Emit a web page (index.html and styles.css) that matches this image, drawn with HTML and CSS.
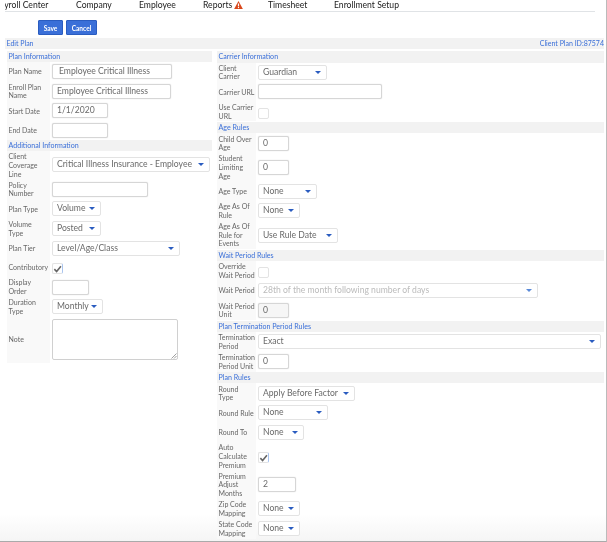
FILE: index.html
```html
<!DOCTYPE html>
<html lang="en">
  <head>
    <meta charset="UTF-8">
    <title>Edit Plan</title>
    <link rel="stylesheet" href="styles.css">
  </head>
  <body>
    <div id="all">
      <div class="topnav">
        <span class="nav-payroll">Payroll Center</span>
        <span class="nav-company">Company</span>
        <span class="nav-employee">Employee</span>
        <span class="nav-reports">Reports
          <svg class="warn" viewBox="0 0 12 11" width="9" height="8"><path d="M6 0 L12 11 L0 11 Z" fill="#d9481c"/><rect x="5.2" y="3.4" width="1.6" height="4" fill="#fff"/><rect x="5.2" y="8.2" width="1.6" height="1.6" fill="#fff"/></svg>
        </span>
        <span class="nav-timesheet">Timesheet</span>
        <span class="nav-enroll">Enrollment Setup</span>
      </div>

      <div class="actions">
        <button class="btn btn-save">Save</button>
        <button class="btn btn-cancel">Cancel</button>
      </div>

      <div class="title-bar">
        <span>Edit Plan</span>
        <span>Client Plan ID:87574</span>
      </div>

      <div class="columns">
        <div class="col col-left">
          <div class="section">Plan Information</div>
          <div class="row"><label>Plan Name</label><div class="ctl w120 ind3 txt">Employee Critical Illness</div></div>
          <div class="row"><label>Enroll Plan Name</label><div class="ctl w119 txt">Employee Critical Illness</div></div>
          <div class="row"><label>Start Date</label><div class="ctl w56 txt">1/1/2020</div></div>
          <div class="row"><label>End Date</label><div class="ctl w56 txt"></div></div>
          <div class="section">Additional Information</div>
          <div class="row"><label>Client<br>Coverage<br>Line</label><div class="ctl w158 sel lift">Critical Illness Insurance - Employee<i class="caret"></i></div></div>
          <div class="row"><label>Policy Number</label><div class="ctl w96 txt"></div></div>
          <div class="row"><label>Plan Type</label><div class="ctl w49 sel">Volume<i class="caret"></i></div></div>
          <div class="row"><label>Volume<br>Type</label><div class="ctl w49 sel">Posted<i class="caret"></i></div></div>
          <div class="row"><label>Plan Tier</label><div class="ctl w128 sel">Level/Age/Class<i class="caret"></i></div></div>
          <div class="row"><label>Contributory</label><div class="check checked"><svg viewBox="0 0 10 10" width="10" height="10"><path d="M1.5 5.2 L4 7.8 L8.8 2" fill="none" stroke="#666" stroke-width="1.8"/></svg></div></div>
          <div class="row"><label>Display Order</label><div class="ctl w37 txt"></div></div>
          <div class="row"><label>Duration Type</label><div class="ctl w51 sel">Monthly<i class="caret"></i></div></div>
          <div class="row row-note"><label>Note</label><div class="ctl note"><svg class="grip" viewBox="0 0 6 6" width="6" height="6"><path d="M0.5 5.5 L5.5 0.5 M3 5.5 L5.5 3" stroke="#777" stroke-width="0.7"/></svg></div></div>
        </div>

        <div class="col col-right">
          <div class="section">Carrier Information</div>
          <div class="row"><label>Client Carrier</label><div class="ctl w69 sel">Guardian<i class="caret"></i></div></div>
          <div class="row"><label>Carrier URL</label><div class="ctl w124 txt"></div></div>
          <div class="row"><label>Use Carrier URL</label><div class="check"></div></div>
          <div class="section">Age Rules</div>
          <div class="row"><label>Child Over Age</label><div class="ctl w31 txt">0</div></div>
          <div class="row"><label>Student<br>Limiting<br>Age</label><div class="ctl w31 txt">0</div></div>
          <div class="row"><label>Age Type</label><div class="ctl w59 sel">None<i class="caret"></i></div></div>
          <div class="row"><label>Age As Of Rule</label><div class="ctl w42 sel">None<i class="caret"></i></div></div>
          <div class="row"><label>Age As Of<br>Rule for<br>Events</label><div class="ctl w80 sel">Use Rule Date<i class="caret"></i></div></div>
          <div class="section">Wait Period Rules</div>
          <div class="row"><label>Override<br>Wait Period</label><div class="check"></div></div>
          <div class="row"><label>Wait Period</label><div class="ctl w280 sel off">28th of the month following number of days<i class="caret"></i></div></div>
          <div class="row"><label>Wait Period<br>Unit</label><div class="ctl w31 txt off-num">0</div></div>
          <div class="section">Plan Termination Period Rules</div>
          <div class="row"><label>Termination<br>Period</label><div class="ctl wfull sel">Exact<i class="caret"></i></div></div>
          <div class="row"><label>Termination<br>Period Unit</label><div class="ctl w31 txt">0</div></div>
          <div class="section">Plan Rules</div>
          <div class="row"><label>Round<br>Type</label><div class="ctl w97 sel">Apply Before Factor<i class="caret"></i></div></div>
          <div class="row"><label>Round Rule</label><div class="ctl w70 sel">None<i class="caret"></i></div></div>
          <div class="row"><label>Round To</label><div class="ctl w46 sel">None<i class="caret"></i></div></div>
          <div class="row"><label>Auto<br>Calculate<br>Premium</label><div class="check checked"><svg viewBox="0 0 10 10" width="10" height="10"><path d="M1.5 5.2 L4 7.8 L8.8 2" fill="none" stroke="#666" stroke-width="1.8"/></svg></div></div>
          <div class="row"><label>Premium<br>Adjust<br>Months</label><div class="ctl w38 txt">2</div></div>
          <div class="row"><label>Zip Code<br>Mapping</label><div class="ctl w42 sel">None<i class="caret"></i></div></div>
          <div class="row"><label>State Code<br>Mapping</label><div class="ctl w42 sel">None<i class="caret"></i></div></div>
        </div>
      </div>
    </div>
  </body>
</html>
```

FILE: styles.css
```css
*{
margin:0;
padding:0;
box-sizing:border-box;
}

html,body{
    height:100%;
    overflow:hidden;
    background-color:#fff;
}

body{
    color:#666;
    font-family:Lato, "Open Sans", sans-serif;
    font-size:7px;
}

#all{
    height:542px;
    padding:0 2px 0 5px;
    border-right:1px solid #bbb;
    border-bottom:1px solid #aaa;
    background:linear-gradient(to bottom, #fff 95%, #f5f5f5);
    filter:blur(0.4px);
}

.topnav{
    height:12px;
    margin-right:9px;
    border-bottom:1px solid #e0e3e6;
    display:flex;
    font-size:8.6px;
    line-height:11px;
    color:#222;
    overflow:hidden;
    white-space:nowrap;
}

.nav-payroll{
    margin-left:-10px;
    width:81px;
    flex:none;
}
.nav-company{ width:63px; }
.nav-employee{ width:64px; }
.nav-reports{ width:65px; }
.nav-timesheet{ width:66px; }

.warn{
    vertical-align:-0.5px;
}

.actions{
    height:26px;
    padding:8px 0 0 33px;
    display:flex;
    gap:3px;
}

.btn{
    height:15px;
    background-color:#3a6fd8;
    border:1px solid #2a5cc0;
    border-radius:1px;
    color:#fff;
    font-family:inherit;
    font-size:6.6px;
    font-weight:bold;
}

.btn-save{ width:25px; }
.btn-cancel{ width:31px; }

.title-bar{
    height:11px;
    background-color:#f2f2f2;
    display:flex;
    justify-content:space-between;
    padding:0 0 0 1.5px;
    line-height:11px;
    color:#3a6fd8;
}

.columns{
    display:flex;
    margin-top:2px;
}

.col-left{
    width:207px;
    padding-left:2px;
    margin-right:5px;
}

.col-right{
    flex:1;
}

.section{
    height:11.5px;
    line-height:11.5px;
    background-color:#f2f2f2;
    color:#3a6fd8;
    padding-left:1.5px;
    font-size:7.1px;
}

.col-left .section{
    height:11px;
    line-height:11px;
}

.col-right .section + .row ~ .section{
    margin-top:0.4px;
}

.row{
    display:flex;
    align-items:center;
    min-height:19.4px;
}

.row label{
    flex:none;
    margin-right:2px;
    padding:1.2px 0 1.2px 1.5px;
    line-height:8.7px;
    align-self:stretch;
    display:flex;
    align-items:center;
    background-color:#f9f9f9;
}

.col-left .row label{ width:43px; }
.col-right .row label{ width:39px; }

.ctl{
    height:15px;
    border:1px solid #e3e3e3;
    border-radius:2px;
    background-color:#fff;
    line-height:13px;
    padding:0 4px;
    font-size:8.6px;
    color:#6a6a6a;
    position:relative;
    white-space:nowrap;
    overflow:hidden;
}

.txt{
    border-color:#d6d6d6;
    box-shadow:0 0 1px #ccc;
}

.lift{ margin-bottom:2px; }
.ind3{ padding-left:6px; }
.off{ color:#bbb; }
.off-num{ background-color:#f6f6f6; }

.w31{ width:31px; }
.w37{ width:37px; }
.w38{ width:38px; }
.w42{ width:42px; }
.w46{ width:46px; }
.w49{ width:49px; }
.w51{ width:51px; }
.w56{ width:56px; }
.w59{ width:59px; }
.w69{ width:69px; }
.w70{ width:70px; }
.w80{ width:80px; }
.w96{ width:96px; }
.w97{ width:97px; }
.w119{ width:119px; }
.w120{ width:120px; }
.w124{ width:124px; }
.w128{ width:128px; }
.w158{ width:158px; }
.w280{ width:280px; }
.wfull{ flex:1; margin-right:3px; }

.caret{
    position:absolute;
    right:5px;
    top:5px;
    width:0;
    height:0;
    border-left:3.2px solid transparent;
    border-right:3.2px solid transparent;
    border-top:3.6px solid #2a5cc0;
}

.off .caret{
    border-top-color:#5a8ad8;
}

.check{
    width:11px;
    height:11px;
    margin-top:3px;
    border:1px solid #e3e3e3;
    border-radius:2px;
    background-color:#fff;
    display:flex;
    align-items:center;
    justify-content:center;
    flex:none;
}

.checked{
    border-right-color:#a9c4ee;
}

.note{
    width:126px;
    height:41px;
    border-color:#d0d0d0;
}

.grip{
    position:absolute;
    right:0;
    bottom:0;
}

.row-note{
    min-height:46px;
}
```
